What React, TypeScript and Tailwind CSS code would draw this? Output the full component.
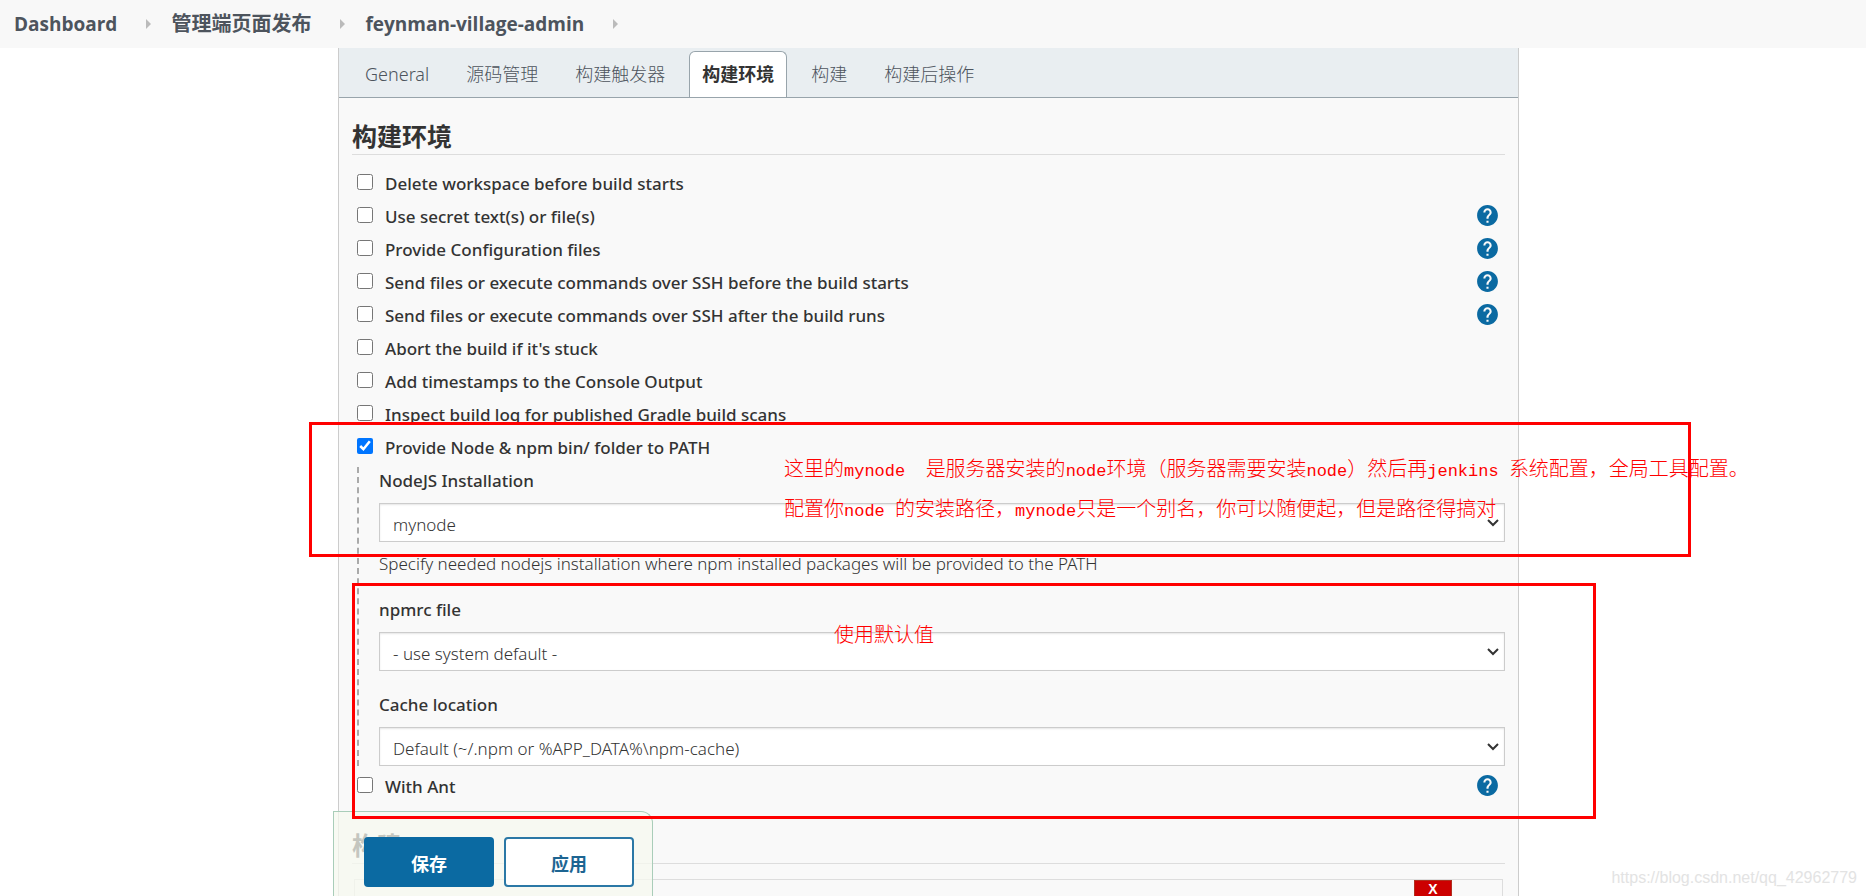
import { useState } from 'react';
import { MdHelp } from 'react-icons/md';

const crumbs = [
  { label: 'Dashboard', size: 'text-[19px]' },
  { label: '管理端页面发布', size: 'text-[20px]' },
  { label: 'feynman-village-admin', size: 'text-[19px]' },
];

const tabs = ['General', '源码管理', '构建触发器', '构建环境', '构建', '构建后操作'];

const wrappers = [
  { id: 'cleanup', label: 'Delete workspace before build starts', help: false },
  { id: 'secrets', label: 'Use secret text(s) or file(s)', help: true },
  { id: 'config-files', label: 'Provide Configuration files', help: true },
  { id: 'ssh-before', label: 'Send files or execute commands over SSH before the build starts', help: true },
  { id: 'ssh-after', label: 'Send files or execute commands over SSH after the build runs', help: true },
  { id: 'timeout', label: "Abort the build if it's stuck", help: false },
  { id: 'timestamps', label: 'Add timestamps to the Console Output', help: false },
  { id: 'gradle', label: 'Inspect build log for published Gradle build scans', help: false },
];

function Breadcrumbs() {
  return (
    <header className="h-12 shrink-0 bg-[#f8f8f8]">
      <nav className="flex h-full items-center pl-[14px] font-['Open_Sans','Noto_Sans_CJK_SC',sans-serif] font-bold text-[#4d545d]">
        {crumbs.map((crumb) => (
          <div key={crumb.label} className="flex items-center">
            <a href="#" className={crumb.size}>
              {crumb.label}
            </a>
            <svg className="mr-5 ml-[29px] h-[10px] w-[5px]" viewBox="0 0 5 10">
              <path d="M0 0L5 5L0 10Z" fill="#bbbbbb" />
            </svg>
          </div>
        ))}
      </nav>
    </header>
  );
}

function TabBar() {
  const [active, setActive] = useState('构建环境');

  const tabClass = (tab: string) => {
    return tab === active
      ? 'border-[#98a4ab] bg-white font-bold text-[#333333]'
      : 'border-transparent font-light text-[#4d545d]';
  };

  return (
    <div className="flex h-[50px] items-end gap-[11px] border-b border-[#98a4ab] bg-[#e9eef1] pl-[13px]">
      {tabs.map((tab) => (
        <button
          key={tab}
          type="button"
          onClick={() => setActive(tab)}
          className={`h-[46px] rounded-t-md border border-b-0 px-3 text-[18px] ${tabClass(tab)}`}
        >
          {tab}
        </button>
      ))}
    </div>
  );
}

function OptionRow({ id, label, help, checked }: { id: string; label: string; help?: boolean; checked?: boolean }) {
  return (
    <div className="flex h-[33px] items-center pr-[5px] pl-[5px]">
      <input id={id} type="checkbox" defaultChecked={checked} className="mb-[2px] h-4 w-4 accent-[#0075ff]" />
      <label htmlFor={id} className="ml-3 pt-[2px] font-medium">
        {label}
      </label>
      {help && (
        <a href="#" aria-label={`Help for ${label}`} className="ml-auto">
          <MdHelp size={25} className="text-[#0b6aa2]" />
        </a>
      )}
    </div>
  );
}

function SelectField({ id, label, value }: { id: string; label: string; value: string }) {
  return (
    <div>
      <label htmlFor={id} className="block leading-7 font-medium">
        {label}
      </label>
      <div className="relative mt-2">
        <select
          id={id}
          className="block h-[39px] w-full appearance-none border border-[#cccccc] bg-white pt-1 pl-[13px] font-light shadow-[inset_0_1px_2px_rgba(0,0,0,0.1)]"
        >
          <option>{value}</option>
        </select>
        <svg className="pointer-events-none absolute top-4 right-[6px] h-2 w-3" viewBox="0 0 12 8">
          <path d="M1 1L6 6L11 1" fill="none" stroke="#333333" strokeWidth="2" />
        </svg>
      </div>
    </div>
  );
}

function SectionTitle({ children }: { children: string }) {
  return <h2 className="border-b border-[#dddddd] text-[25px] leading-9 font-bold">{children}</h2>;
}

function Latin({ children }: { children: string }) {
  return <span className="font-['Liberation_Mono',monospace] text-[17px] leading-none">{children}</span>;
}

function Annotations() {
  return (
    <div className="pointer-events-none absolute inset-0 font-['Noto_Sans_CJK_SC',sans-serif] text-[20px] leading-10 font-light whitespace-pre text-[#ff0000]">
      <div className="absolute top-[422px] left-[309px] h-[135px] w-[1382px] border-3 border-[#ff0000]" />
      <div className="absolute top-[583px] left-[352px] h-[236px] w-[1244px] border-3 border-[#ff0000]" />
      <div className="absolute top-[448px] left-[784px]">
        <p>
          这里的<Latin>mynode  </Latin>是服务器安装的<Latin>node</Latin>环境（服务器需要安装<Latin>node</Latin>）然后再
          <Latin>jenkins </Latin>系统配置，全局工具配置。
        </p>
        <p>
          配置你<Latin>node </Latin>的安装路径，<Latin>mynode</Latin>只是一个别名，你可以随便起，但是路径得搞对
        </p>
      </div>
      <p className="absolute top-[614px] left-[834px]">使用默认值</p>
    </div>
  );
}

export default function App() {
  return (
    <div className="relative flex h-screen flex-col overflow-hidden bg-white font-['Noto_Sans','Noto_Sans_CJK_SC',sans-serif] text-[17px] text-[#333333]">
      <Breadcrumbs />

      <main className="mr-[347px] ml-[338px] grow border-x border-[#cccccc] bg-[#f9f9f9]">
        <TabBar />
        <form className="px-[13px] pt-5">
          <SectionTitle>构建环境</SectionTitle>
          <div className="mt-[11px]">
            {wrappers.map((item) => (
              <OptionRow key={item.id} {...item} />
            ))}
            <OptionRow id="nodejs" label="Provide Node & npm bin/ folder to PATH" checked />
          </div>

          <div className="mt-1 ml-[5px] border-l-2 border-dashed border-[#aaaaaa] pl-5">
            <SelectField id="node-install" label="NodeJS Installation" value="mynode" />
            <p className="mt-[10px] mb-5 leading-6 font-light">
              Specify needed nodejs installation where npm installed packages will be provided to the PATH
            </p>
            <SelectField id="npmrc" label="npmrc file" value="- use system default -" />
            <div className="mt-5">
              <SelectField id="cache" label="Cache location" value="Default (~/.npm or %APP_DATA%\npm-cache)" />
            </div>
          </div>

          <div className="mt-[3px] mb-[25px]">
            <OptionRow id="ant" label="With Ant" help />
          </div>

          <SectionTitle>构建</SectionTitle>
          <div className="mt-[15px] mr-[2px] ml-[2px] h-40 border border-[#dddddd]">
            <div className="flex justify-end pr-[50px]">
              <button type="button" className="w-[38px] border border-[#b03020] bg-[#cc0000] pb-2 font-['Liberation_Sans',sans-serif] text-[14px] leading-4 font-bold text-white">
                X
              </button>
            </div>
          </div>
        </form>
      </main>

      <div className="absolute bottom-0 left-[333px] flex h-[85px] w-[320px] gap-[10px] rounded-tr-xl border border-b-0 border-[#a9cdb9] bg-[#f6f8ef]/75 pt-[25px] pl-[30px]">
        <button type="submit" className="h-[50px] w-[130px] rounded bg-[#0b6aa2] pt-1 text-[18px] font-bold text-white">
          保存
        </button>
        <button type="button" className="h-[50px] w-[130px] rounded border-2 border-[#2b78a6] bg-white pt-1 text-[18px] font-bold text-[#1d6592]">
          应用
        </button>
      </div>

      <Annotations />

      <p className="absolute right-[9px] bottom-[6px] font-['Liberation_Sans',sans-serif] text-[16px] text-[#e3e3e3]">
        https://blog.csdn.net/qq_42962779
      </p>
    </div>
  );
}
